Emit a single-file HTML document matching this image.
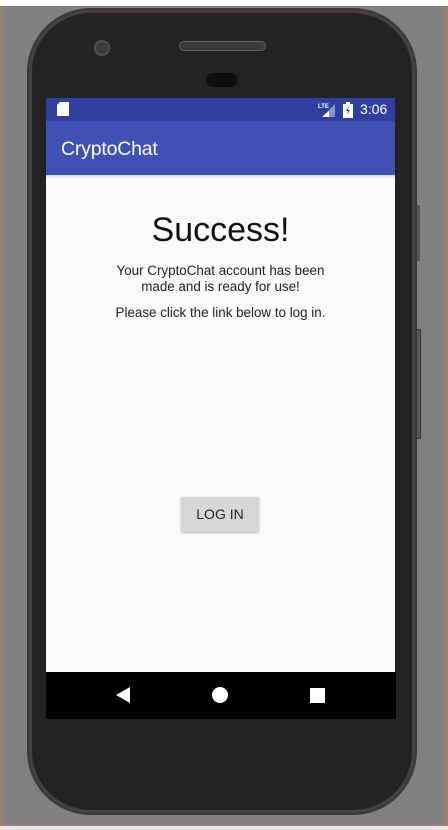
<!DOCTYPE html>
<html><head><meta charset="utf-8"><style>
*{margin:0;padding:0;box-sizing:border-box}
body{width:448px;height:830px;overflow:hidden;background:#808080;position:relative;font-family:"Liberation Sans",Roboto,sans-serif}
.abs{position:absolute}
</style></head><body>
<div class="abs" style="left:0;top:0;width:448px;height:6px;background:#fff"></div>
<div class="abs" style="left:1px;top:6px;width:1px;height:820px;background:#d07060"></div>
<div class="abs" style="left:446px;top:6px;width:1px;height:820px;background:#d07060"></div>
<div class="abs" style="left:1px;top:825px;width:446px;height:1px;background:#d07060"></div>
<div class="abs" style="left:0;top:826px;width:448px;height:4px;background:#e8e8e8"></div>
<div class="abs" style="left:416px;top:205px;width:4px;height:56px;background:#555;border-radius:1px"></div>
<div class="abs" style="left:416px;top:329px;width:5px;height:110px;background:#5a5a5a;border:1px solid #333;border-radius:1px"></div>
<div class="abs" style="left:27px;top:8px;width:390px;height:807px;border-radius:64px;background:#3a3836;"></div>
<div class="abs" style="left:29px;top:10px;width:386px;height:803px;border-radius:62px;background:#45423f;"></div>
<div class="abs" style="left:32px;top:13px;width:380px;height:797px;border-radius:59px;background:#242223;"></div>
<div class="abs" style="left:94px;top:40px;width:16px;height:16px;border-radius:50%;background:#3a3a3a;border:2px solid #555"></div>
<div class="abs" style="left:179px;top:41px;width:87px;height:10px;border-radius:5px;background:#3a3a3a;border:1px solid #666"></div>
<div class="abs" style="left:206px;top:73px;width:31px;height:14px;border-radius:7px;background:#0e0e0e"></div>
<div class="abs" style="left:46px;top:98px;width:349px;height:23px;background:#303f9f"></div>
<svg class="abs" style="left:57px;top:102px" width="12" height="14"><path d="M3 0H12V14H0V3Z" fill="#fff"/></svg>
<svg class="abs" style="left:318px;top:102px" width="18" height="15"><text x="0" y="6" font-size="6" fill="#fff" font-family="Liberation Sans" font-weight="bold">LTE</text><path d="M17 2V15H4Z" fill="#8a93c9"/><path d="M11 9V15H4Z" fill="#fff"/></svg>
<svg class="abs" style="left:343px;top:102px" width="10" height="16"><path d="M3 0H7V2H10V16H0V2H3Z" fill="#fff"/><path d="M6 4L3 9H5L4 13L7 8H5Z" fill="#303f9f"/></svg>
<div class="abs" style="left:360px;top:101px;color:#fff;font-size:14px">3:06</div>
<div class="abs" style="left:46px;top:121px;width:349px;height:54px;background:#3f51b5;box-shadow:0 2px 3px rgba(0,0,0,.2)"></div>
<div class="abs" style="left:61px;top:138px;color:#fff;font-size:19.5px;letter-spacing:-0.2px">CryptoChat</div>
<div class="abs" style="left:46px;top:175px;width:349px;height:497px;background:#fafafa"></div>
<div class="abs" style="left:46px;top:175px;width:349px;height:4px;background:linear-gradient(rgba(0,0,0,.12),rgba(0,0,0,0))"></div>
<div class="abs" style="left:46px;top:211px;width:349px;text-align:center;font-size:34px;color:#111">Success!</div>
<div class="abs" style="left:46px;top:263px;width:349px;text-align:center;font-size:13.4px;line-height:16px;color:#222">Your CryptoChat account has been<br>made and is ready for use!</div>
<div class="abs" style="left:46px;top:305px;width:349px;text-align:center;font-size:13.4px;line-height:16px;color:#222">Please click the link below to log in.</div>
<div class="abs" style="left:181px;top:497px;width:78px;height:35px;background:#d6d7d7;border-radius:2px;box-shadow:0 1px 2px rgba(0,0,0,.25);text-align:center;line-height:35px;font-size:14px;color:#222">LOG IN</div>
<div class="abs" style="left:46px;top:672px;width:350px;height:47px;background:#000"></div>
<svg class="abs" style="left:115px;top:686px" width="16" height="18"><path d="M15 1V17L1 9Z" fill="#fff"/></svg>
<div class="abs" style="left:212px;top:687px;width:16px;height:16px;border-radius:50%;background:#fff"></div>
<div class="abs" style="left:310px;top:688px;width:15px;height:15px;background:#fff"></div>
</body></html>
